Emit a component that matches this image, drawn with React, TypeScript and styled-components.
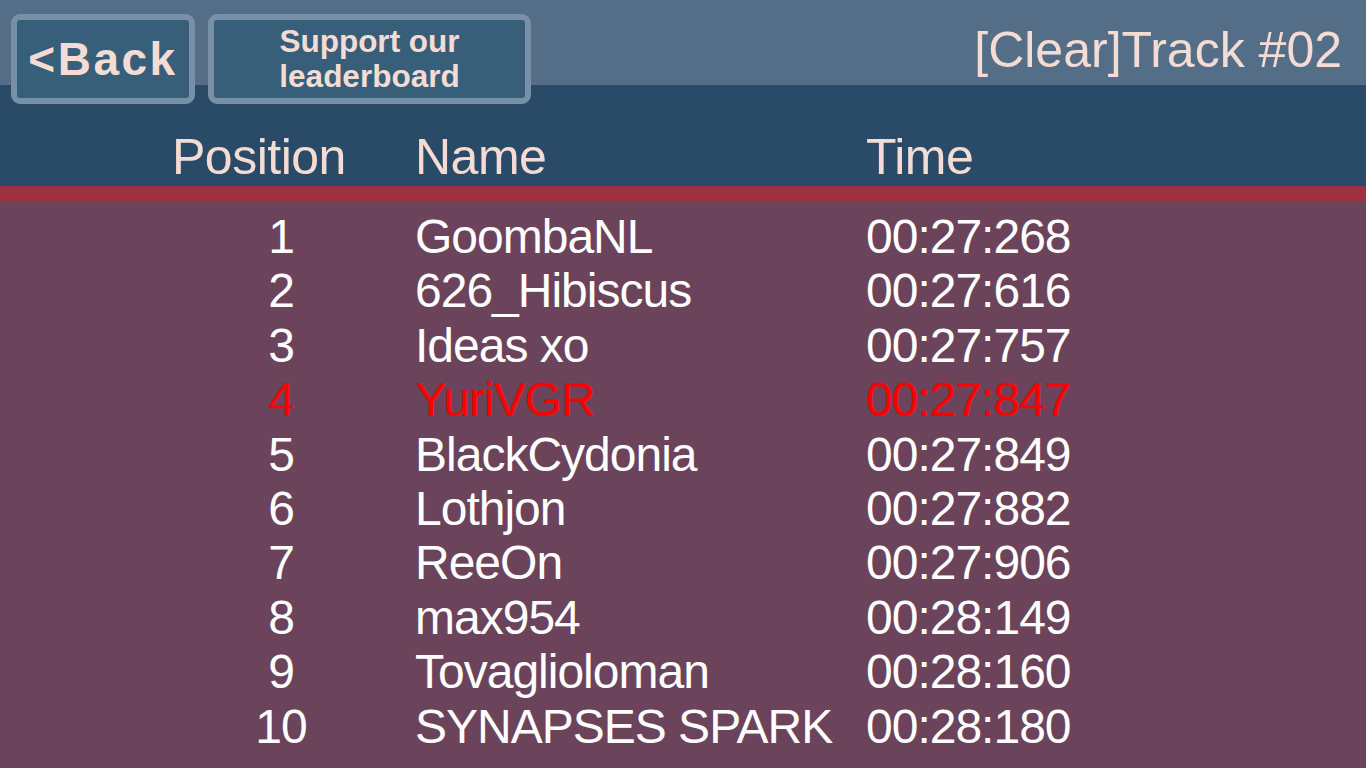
import React from "react";
import styled, { createGlobalStyle } from "styled-components";

const GlobalStyle = createGlobalStyle`
  html, body {
    margin: 0;
    padding: 0;
    background: #6b435a;
    overflow: hidden;
  }
  body {
    font-family: "Liberation Sans", Arial, sans-serif;
  }
`;

const Page = styled.div`
  width: 1366px;
  height: 768px;
  display: flex;
  flex-direction: column;
  background: #6b435a;
`;

const Header = styled.header`
  display: flex;
  flex-direction: column;
  height: 186px;
  background: linear-gradient(to bottom, #546e87 0, #546e87 85px, #2a4b68 85px, #2a4b68 100%);
`;

const Toolbar = styled.div`
  display: flex;
  align-items: flex-start;
  gap: 13px;
  height: 104px;
  box-sizing: border-box;
  padding: 14px 24px 0 11px;
`;

const Button = styled.button<{ $width: number }>`
  box-sizing: border-box;
  width: ${(p) => p.$width}px;
  height: 90px;
  border: 6px solid #7790a8;
  border-radius: 9px;
  background: #375f7a;
  color: #f4dcd4;
  font-family: "Liberation Sans", Arial, sans-serif;
  font-weight: bold;
  cursor: pointer;
  display: flex;
  align-items: center;
  justify-content: center;
  text-align: center;
  padding: 0;
`;

const BackLabel = styled.span`
  font-size: 46px;
  letter-spacing: 2.5px;
  line-height: 1;
  margin-left: 0;
`;

const SupportLabel = styled.span`
  font-size: 31.5px;
  line-height: 35px;
`;

const Title = styled.h1`
  margin: 9px 0 0 auto;
  font-size: 50px;
  line-height: 54px;
  font-weight: normal;
  color: #f4dcd4;
`;

const Grid = styled.div`
  display: grid;
  grid-template-columns: 218px 426px 1fr;
  column-gap: 25px;
  padding-left: 172px;
`;

const ColumnHeads = styled(Grid)`
  padding-top: 26px;
`;

const HeadCell = styled.div`
  font-size: 50px;
  line-height: 54px;
  letter-spacing: -0.5px;
  color: #f4dcd4;
`;

const Stripe = styled.div`
  height: 16px;
  background: #9f303f;
`;

const Rows = styled.div`
  padding-top: 8px;
  display: flex;
  flex-direction: column;
`;

const Row = styled(Grid)<{ $highlight?: boolean }>`
  color: ${(p) => (p.$highlight ? "#ff0000" : "#ffffff")};
  font-size: 48px;
  line-height: 54.4px;
  letter-spacing: -1px;
  white-space: nowrap;
`;

const PosCell = styled.div`
  text-align: center;
`;

const Cell = styled.div``;

const entries = [
  { pos: 1, name: "GoombaNL", time: "00:27:268" },
  { pos: 2, name: "626_Hibiscus", time: "00:27:616" },
  { pos: 3, name: "Ideas xo", time: "00:27:757" },
  { pos: 4, name: "YuriVGR", time: "00:27:847", me: true },
  { pos: 5, name: "BlackCydonia", time: "00:27:849" },
  { pos: 6, name: "Lothjon", time: "00:27:882" },
  { pos: 7, name: "ReeOn", time: "00:27:906" },
  { pos: 8, name: "max954", time: "00:28:149" },
  { pos: 9, name: "Tovaglioloman", time: "00:28:160" },
  { pos: 10, name: "SYNAPSES SPARK", time: "00:28:180" },
];

export default function App() {
  return (
    <Page>
      <GlobalStyle />
      <Header>
        <Toolbar>
          <Button $width={184}>
            <BackLabel>&lt;Back</BackLabel>
          </Button>
          <Button $width={323}>
            <SupportLabel>
              Support our
              <br />
              leaderboard
            </SupportLabel>
          </Button>
          <Title>[Clear]Track #02</Title>
        </Toolbar>
        <ColumnHeads>
          <HeadCell>Position</HeadCell>
          <HeadCell>Name</HeadCell>
          <HeadCell>Time</HeadCell>
        </ColumnHeads>
      </Header>
      <Stripe />
      <Rows>
        {entries.map((e) => (
          <Row key={e.pos} $highlight={e.me}>
            <PosCell>{e.pos}</PosCell>
            <Cell>{e.name}</Cell>
            <Cell>{e.time}</Cell>
          </Row>
        ))}
      </Rows>
    </Page>
  );
}
